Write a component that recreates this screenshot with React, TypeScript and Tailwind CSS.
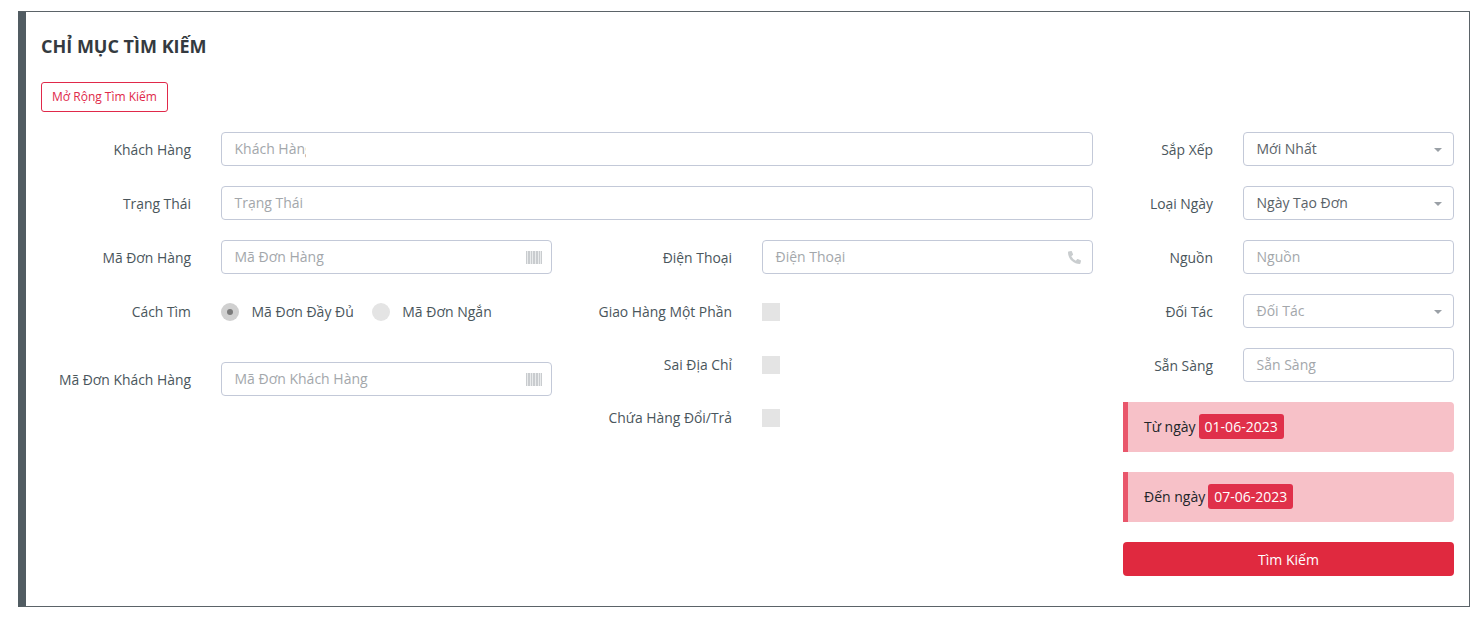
import { FaPhoneAlt } from "react-icons/fa";

function Label({ w, children }: { w: string; children: React.ReactNode }) {
  return <div className={`${w} shrink-0 text-right text-[13.9px] leading-[21px] text-[#4a565c]`}>{children}</div>;
}

function Barcode() {
  const bars = [0, 2, 3, 5, 7, 8, 10, 11, 13, 15];
  return (
    <svg width="16" height="13" viewBox="0 0 16 13" className="absolute right-[9px] top-[10px]">
      <rect x="0" y="0" width="16" height="13" fill="#e9ebec" />
      {bars.map((x) => (
        <rect key={x} x={x} y="0" width="1" height="13" fill="#c9cccf" />
      ))}
    </svg>
  );
}

function Caret() {
  return <span className="absolute right-[11px] top-[15px] h-0 w-0 border-x-[4px] border-t-[4px] border-x-transparent border-t-[#9aa0a6]" />;
}

function Field({ placeholder, value, icon, clip }: { placeholder?: string; value?: string; icon?: React.ReactNode; clip?: boolean }) {
  return (
    <div className="relative h-[34px] min-w-0 flex-1 rounded-[4px] border border-[#c3c9d8] bg-white px-[12.5px] text-[14px] leading-[31px]">
      <span className={`${value ? "text-[#5a6268]" : "text-[#a3a7ab]"} ${clip ? "inline-block h-[25px] w-[71px] overflow-hidden whitespace-nowrap align-top" : ""}`}>{value ?? placeholder}</span>
      {icon}
    </div>
  );
}

function Row({ w, label, children }: { w: string; label: string; children: React.ReactNode }) {
  return (
    <div className="flex h-[34px] items-center gap-[30px]">
      <Label w={w}>{label}</Label>
      {children}
    </div>
  );
}

function Radio({ checked, label }: { checked?: boolean; label: string }) {
  return (
    <div className="flex items-center gap-[12.5px]">
      <span className={`flex h-[18px] w-[18px] items-center justify-center rounded-full ${checked ? "bg-[#d0d0d0]" : "bg-[#e4e4e4]"}`}>
        {checked && <span className="h-[6px] w-[6px] rounded-full bg-[#7b7b7b]" />}
      </span>
      <span className="pb-[2px] text-[14px] leading-[21px] text-[#4a565c]">{label}</span>
    </div>
  );
}

function Check({ label }: { label: string }) {
  return (
    <div className="flex h-[18px] items-center gap-[30px]">
      <div className="pb-[2px]"><Label w="w-[150px]">{label}</Label></div>
      <span className="h-[18px] w-[18px] bg-[#e4e4e4]" />
    </div>
  );
}

function DateNote({ label, date }: { label: string; date: string }) {
  return (
    <div className="flex h-[50px] items-center gap-[3px] rounded-r-[4px] border-l-[5px] border-[#e9566b] bg-[#f7c1c8] pb-[1px] pl-[16px] text-[14px] text-[#212529]">
      <span>{label}</span>
      <span className="rounded-[3px] bg-[#e0304a] px-[6px] leading-[25px] text-white">{date}</span>
    </div>
  );
}

export default function App() {
  return (
    <div className="min-h-[617px] bg-white pl-[18px] pr-[9px] pt-[11px] font-['Open_Sans',sans-serif]">
      <div className="h-[596px] border border-l-[8px] border-[#5b6368] border-l-[#515c62] bg-white px-[15px] pt-[19px]">
        <h2 className="text-[18px] font-bold leading-[30px] text-[#343a40]">CHỈ MỤC TÌM KIẾM</h2>
        <button className="mt-[21px] block h-[30px] w-[127px] rounded-[3px] border border-[#e0294a] text-center text-[12px] text-[#e0294a]">
          Mở Rộng Tìm Kiếm
        </button>
        <div className="mt-[20px] flex gap-[30px]">
          <div className="w-[1052px]">
            <div className="flex flex-col gap-[20px]">
              <Row w="w-[150px]" label="Khách Hàng"><Field placeholder="Khách Hàng" clip /></Row>
              <Row w="w-[150px]" label="Trạng Thái"><Field placeholder="Trạng Thái" /></Row>
            </div>
            <div className="mt-[20px] grid grid-cols-2 gap-[30px]">
              <div>
                <Row w="w-[150px]" label="Mã Đơn Hàng"><Field placeholder="Mã Đơn Hàng" icon={<Barcode />} /></Row>
                <div className="mt-[29px] flex h-[18px] items-center gap-[30px]">
                  <div className="pb-[2px]"><Label w="w-[150px]">Cách Tìm</Label></div>
                  <div className="flex gap-[18px]">
                    <Radio checked label="Mã Đơn Đầy Đủ" />
                    <Radio label="Mã Đơn Ngắn" />
                  </div>
                </div>
                <div className="mt-[41px]">
                  <Row w="w-[150px]" label="Mã Đơn Khách Hàng"><Field placeholder="Mã Đơn Khách Hàng" icon={<Barcode />} /></Row>
                </div>
              </div>
              <div>
                <Row w="w-[150px]" label="Điện Thoại">
                  <Field placeholder="Điện Thoại" icon={<FaPhoneAlt className="absolute right-[11px] top-[10px] h-[13px] w-[13px] text-[#c9cdcf]" />} />
                </Row>
                <div className="mt-[29px] flex flex-col gap-[35px]">
                  <Check label="Giao Hàng Một Phần" />
                  <Check label="Sai Địa Chỉ" />
                  <Check label="Chứa Hàng Đổi/Trả" />
                </div>
              </div>
            </div>
          </div>
          <div className="flex w-[331px] flex-col gap-[20px]">
            <Row w="w-[90px]" label="Sắp Xếp"><Field value="Mới Nhất" icon={<Caret />} /></Row>
            <Row w="w-[90px]" label="Loại Ngày"><Field value="Ngày Tạo Đơn" icon={<Caret />} /></Row>
            <Row w="w-[90px]" label="Nguồn"><Field placeholder="Nguồn" /></Row>
            <Row w="w-[90px]" label="Đối Tác"><Field placeholder="Đối Tác" icon={<Caret />} /></Row>
            <Row w="w-[90px]" label="Sẵn Sàng"><Field placeholder="Sẵn Sàng" /></Row>
            <DateNote label="Từ ngày" date="01-06-2023" />
            <DateNote label="Đến ngày" date="07-06-2023" />
            <button className="h-[34px] rounded-[4px] bg-[#e0293f] text-center text-[14px] font-medium text-white">Tìm Kiếm</button>
          </div>
        </div>
      </div>
    </div>
  );
}
